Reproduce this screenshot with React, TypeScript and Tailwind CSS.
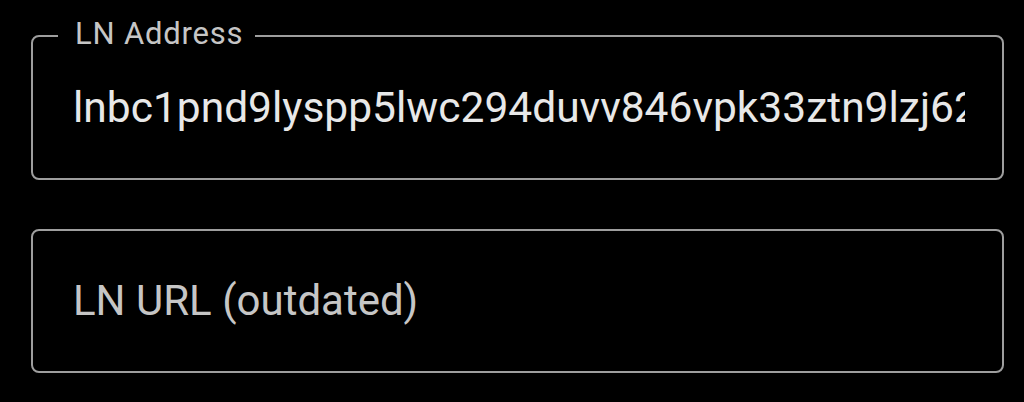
import React from "react";

export default function App() {
  return (
    <div
      className="w-[1024px] h-[402px] bg-black pt-[35px] pl-[31px]"
      style={{ fontFamily: "Roboto, 'Noto Sans', sans-serif" }}
    >
      <div className="w-[973px] flex flex-col gap-[49px]">
        <div className="relative h-[145px] border-2 border-[#9e9e9e] rounded-[8px] flex items-center">
          <span className="absolute left-[25px] top-[-19px] bg-black pl-[17px] pr-[12px] text-[31px] leading-[31px] tracking-[0.8px] text-[#c6c6c6]">
            LN Address
          </span>
          <div className="ml-[40px] mr-[37px] overflow-hidden whitespace-nowrap text-[42.5px] leading-[50px] text-[#e8e8e8]">
            lnbc1pnd9lyspp5lwc294duvv846vpk33ztn9lzj62qxyz8h3m7k
          </div>
        </div>
        <div className="h-[144px] border-2 border-[#9e9e9e] rounded-[8px] flex items-center">
          <div className="ml-[40px] text-[42px] leading-[50px] text-[#c6c6c6]">
            LN URL (outdated)
          </div>
        </div>
      </div>
    </div>
  );
}
